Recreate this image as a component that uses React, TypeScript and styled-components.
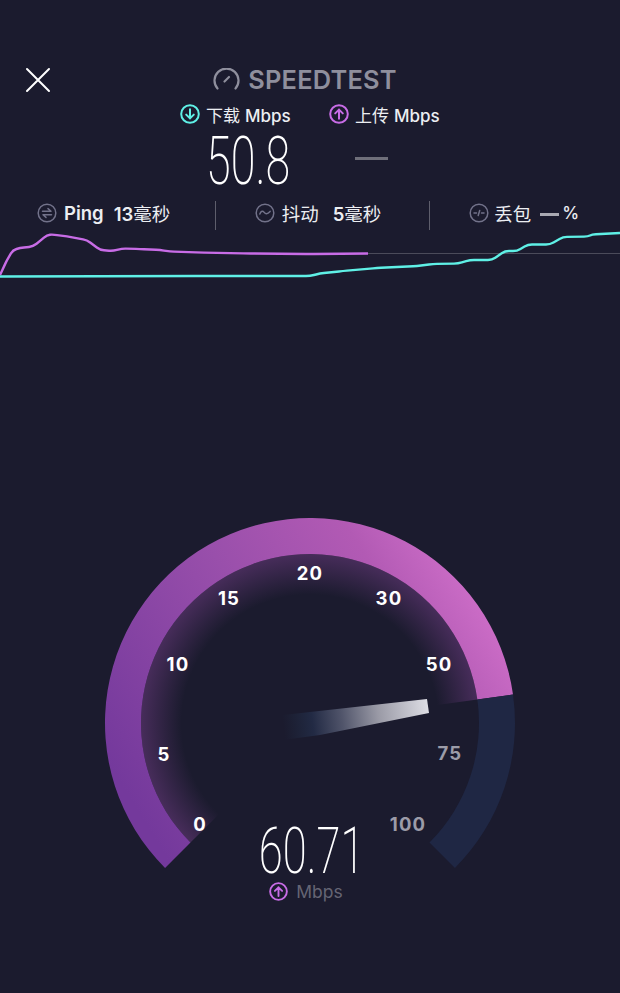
import styled, { createGlobalStyle } from 'styled-components';

const CYAN = '#5ff0e6';
const PURPLE = '#c86ce6';
const CX = 210;
const CY = 210;

const Global = createGlobalStyle`
  html, body {
    margin: 0;
    padding: 0;
    background: #1b1b2e;
  }
  #root {
    height: 993px;
    overflow: hidden;
  }
`;

const polar = (r: number, deg: number) => {
  const a = (deg * Math.PI) / 180;
  return [CX + r * Math.cos(a), CY - r * Math.sin(a)];
};

// ring sector between two angles, counted clockwise from startDeg to endDeg
const sector = (r1: number, r2: number, startDeg: number, endDeg: number) => {
  const [ax, ay] = polar(r2, startDeg);
  const [bx, by] = polar(r2, endDeg);
  const [cx, cy] = polar(r1, endDeg);
  const [dx, dy] = polar(r1, startDeg);
  const large = startDeg - endDeg > 180 ? 1 : 0;
  return `M${ax} ${ay}A${r2} ${r2} 0 ${large} 1 ${bx} ${by}L${cx} ${cy}A${r1} ${r1} 0 ${large} 0 ${dx} ${dy}Z`;
};

const purpleLine = [
  [0, 275], [7, 260], [13, 250], [20, 248], [33, 246.5], [40, 241], [47, 235], [53, 234.5], [67, 236.5], [87, 240],
  [100, 250], [113, 251], [122, 248.5], [140, 249], [160, 250], [170, 251.5], [200, 252.5], [247, 253.5], [310, 254], [368, 253.5],
];

const cyanLine = [
  [0, 276.5], [200, 276], [310, 276], [320, 273.5], [343, 271], [377, 268], [417, 266], [433, 264], [458, 263.5],
  [470, 260], [492, 260], [505, 251], [517, 251], [528, 244.5], [550, 244.5], [563, 237], [588, 236.5], [592, 234.5], [620, 233],
];

const gaugeLabels = [
  { text: '0', x: 200, y: 824, dim: false },
  { text: '5', x: 164, y: 754, dim: false },
  { text: '10', x: 178, y: 664, dim: false },
  { text: '15', x: 229, y: 598, dim: false },
  { text: '20', x: 310, y: 573, dim: false },
  { text: '30', x: 389, y: 598, dim: false },
  { text: '50', x: 439, y: 664, dim: false },
  { text: '75', x: 450, y: 753, dim: true },
  { text: '100', x: 408, y: 824, dim: true },
];

const Page = styled.div`
  width: 620px;
  height: 993px;
  display: flex;
  flex-direction: column;
  color: #fff;
  font-family: 'Inter', 'Noto Sans CJK SC', sans-serif;
`;

const Header = styled.header`
  display: grid;
  grid-template-columns: 76px 1fr 86px;
  align-items: center;
  height: 26px;
  margin-top: 64px;
  padding-left: 25px;
  box-sizing: border-box;
  width: 620px;
`;

const CloseBtn = styled.button`
  width: 26px;
  height: 26px;
  padding: 0;
  border: none;
  background: none;
  display: block;
`;

const Brand = styled.div`
  display: flex;
  align-items: center;
  justify-content: center;
  gap: 8px;
  margin-left: -25px;
  color: #8f8f9d;
  font-size: 25.4px;
  font-weight: 600;
  letter-spacing: 0.2px;
`;

const SpeedColumns = styled.div`
  display: grid;
  grid-template-columns: 149px 149px;
  padding-left: 180px;
  margin-top: 14px;
`;

const SpeedCol = styled.div`
  display: flex;
  flex-direction: column;
`;

const SpeedLabel = styled.div`
  display: flex;
  align-items: center;
  gap: 6px;
  height: 20px;
  font-size: 17px;
  font-weight: 500;
  color: #eceef2;
  white-space: nowrap;
`;

const CjkLabel = styled.span`
  font-weight: 400;
  margin-right: 5px;
`;

const SpeedValue = styled.div`
  height: 62px;
  margin-top: 7px;
  margin-left: 26px;
  font-family: 'Roboto', sans-serif;
  font-weight: 200;
  font-size: 66px;
  line-height: 62px;
  color: #fff;
  transform: scaleX(0.68);
  transform-origin: left center;
`;

const NoValue = styled.div`
  width: 33px;
  height: 3px;
  margin: 33px 0 0 26px;
  background: #6f6f7a;
`;

const Metrics = styled.div`
  display: flex;
  align-items: center;
  height: 30px;
  margin-top: 5px;
`;

const Metric = styled.div<{ $width: number; $pad: number; $iconGap?: number }>`
  display: flex;
  align-items: center;
  gap: ${(p) => p.$iconGap ?? 7}px;
  width: ${(p) => p.$width}px;
  padding-left: ${(p) => p.$pad}px;
  box-sizing: border-box;
  font-size: 18.5px;
  font-weight: 600;
  color: #eceef2;
  white-space: nowrap;
`;

const MetricName = styled.span<{ $gap: number; $cjk?: boolean }>`
  margin-right: ${(p) => p.$gap}px;
  font-weight: ${(p) => (p.$cjk ? 400 : 600)};
`;

const MetricUnit = styled.span`
  font-weight: 400;
`;

const Divider = styled.div`
  width: 1px;
  height: 29px;
  margin-top: 4px;
  background: #5e5e6c;
  flex: none;
`;

const LossValue = styled.span`
  font-size: 17px;
  font-weight: 500;
`;

const LossDash = styled.span`
  display: inline-block;
  width: 19px;
  height: 3.5px;
  background: #a9a9b2;
  margin-right: 3px;
  vertical-align: middle;
`;

const ChartBox = styled.svg`
  display: block;
  width: 620px;
  height: 60px;
  margin-top: 2px;
  flex: none;
`;

const GaugeWrap = styled.div`
  position: relative;
  width: 420px;
  height: 400px;
  margin: 223px 0 0 100px;
`;

const GaugeSvg = styled.svg`
  display: block;
`;

const TickLabel = styled.text<{ $dim: boolean }>`
  font-family: 'Inter', sans-serif;
  font-weight: 700;
  font-size: 18.5px;
  letter-spacing: 1.2px;
  text-anchor: middle;
  dominant-baseline: central;
  fill: ${(p) => (p.$dim ? '#9c9ca8' : '#fff')};
`;

const Reading = styled.div`
  position: absolute;
  left: 0;
  right: 0;
  top: 308px;
  display: flex;
  flex-direction: column;
  align-items: center;
`;

const ReadingValue = styled.div`
  height: 58px;
  font-family: 'Roboto', sans-serif;
  font-weight: 200;
  font-size: 64px;
  line-height: 62px;
  color: #fff;
  transform: translateX(2px) scaleX(0.68);
`;

const ReadingUnit = styled.div`
  display: flex;
  align-items: center;
  gap: 8px;
  margin: 2px 8px 0 0;
  font-size: 17.5px;
  color: #656574;
`;

const ArrowBadge = ({ color, down, size = 20 }: { color: string; down?: boolean; size?: number }) => (
  <svg width={size} height={size} viewBox="0 0 20 20" fill="none" stroke={color} strokeWidth="2" strokeLinecap="round" strokeLinejoin="round">
    <circle cx="10" cy="10" r="8.8" />
    {down ? <path d="M10 5.2v9.2M6.2 10.6l3.8 3.8 3.8-3.8" /> : <path d="M10 14.8V5.6M6.2 9.4L10 5.6l3.8 3.8" />}
  </svg>
);

const MetricIcon = ({ kind }: { kind: 'ping' | 'jitter' | 'loss' }) => (
  <svg width="20" height="20" viewBox="0 0 20 20" fill="none" stroke="#72728a" strokeWidth="1.5" strokeLinecap="round" strokeLinejoin="round" style={{ flex: 'none' }}>
    <circle cx="10" cy="10" r="8.8" />
    {kind === 'ping' && <path d="M5.5 8.2h8.5L11 5.6M14.5 11.8H6l3 2.6" />}
    {kind === 'jitter' && <path d="M4.8 11c1.3-3.4 3-3.4 4.4-1.6s3 2 5.9-1" />}
    {kind === 'loss' && <path d="M5 10h2.5M9.2 12.5l1.5-5M12.5 10H15" />}
  </svg>
);

// rounds each corner of a hand-traced line over a few px, so the flat steps stay flat
const linePath = (pts: number[][], top: number, radius = 4) => {
  let d = `M${pts[0][0]} ${pts[0][1] - top}`;
  for (let i = 1; i < pts.length - 1; i++) {
    const [x, y] = pts[i];
    const toward = ([ox, oy]: number[]) => {
      const len = Math.hypot(ox - x, oy - y);
      const t = Math.min(radius, len / 2) / len;
      return [x + (ox - x) * t, y + (oy - y) * t - top];
    };
    const [ax, ay] = toward(pts[i - 1]);
    const [bx, by] = toward(pts[i + 1]);
    d += `L${ax} ${ay}Q${x} ${y - top} ${bx} ${by}`;
  }
  const last = pts[pts.length - 1];
  return `${d}L${last[0]} ${last[1] - top}`;
};

export default function App() {
  return (
    <Page>
      <Global />
      <Header>
        <CloseBtn aria-label="close">
          <svg width="26" height="26" viewBox="0 0 26 26" stroke="#fff" strokeWidth="2" strokeLinecap="round">
            <path d="M2 2l22 22M24 2L2 24" />
          </svg>
        </CloseBtn>
        <Brand>
          <svg width="27" height="23" viewBox="0 0 27 23" fill="none" stroke="#8f8f9d" strokeWidth="2.2" strokeLinecap="round">
            <path d="M4.5 20.5A12 12 0 1 1 22.5 20.5" />
            <path d="M11.5 13.5l4.5-4.5" />
          </svg>
          SPEEDTEST
        </Brand>
        <span />
      </Header>

      <SpeedColumns>
        <SpeedCol>
          <SpeedLabel>
            <ArrowBadge color={CYAN} down />
            <span>
              <CjkLabel>下载</CjkLabel>Mbps
            </span>
          </SpeedLabel>
          <SpeedValue>50.8</SpeedValue>
        </SpeedCol>
        <SpeedCol>
          <SpeedLabel>
            <ArrowBadge color={PURPLE} />
            <span>
              <CjkLabel>上传</CjkLabel>Mbps
            </span>
          </SpeedLabel>
          <NoValue />
        </SpeedCol>
      </SpeedColumns>

      <Metrics>
        <Metric $width={215} $pad={37}>
          <MetricIcon kind="ping" />
          <MetricName $gap={3}>Ping</MetricName>
          <span>
            13<MetricUnit>毫秒</MetricUnit>
          </span>
        </Metric>
        <Divider />
        <Metric $width={214} $pad={39}>
          <MetricIcon kind="jitter" />
          <MetricName $gap={7} $cjk>
            抖动
          </MetricName>
          <span>
            5<MetricUnit>毫秒</MetricUnit>
          </span>
        </Metric>
        <Divider />
        <Metric $width={190} $pad={39} $iconGap={5}>
          <MetricIcon kind="loss" />
          <MetricName $gap={4} $cjk>
            丢包
          </MetricName>
          <LossValue>
            <LossDash />%
          </LossValue>
        </Metric>
      </Metrics>

      <ChartBox viewBox="0 0 620 60">
        <line x1="368" x2="620" y1="23.5" y2="23.5" stroke="#4b4b5a" strokeWidth="1" />
        <path d={linePath(purpleLine, 230)} fill="none" stroke={PURPLE} strokeWidth="2.4" strokeLinejoin="round" />
        <path d={linePath(cyanLine, 230)} fill="none" stroke={CYAN} strokeWidth="2.4" strokeLinejoin="round" />
      </ChartBox>

      <GaugeWrap>
        <GaugeSvg width="420" height="400" viewBox="0 0 420 400">
          <defs>
            <linearGradient id="arc" gradientUnits="userSpaceOnUse" x1="70" y1="350" x2="410" y2="140">
              <stop offset="0" stopColor="#74399c" />
              <stop offset="0.5" stopColor="#994fab" />
              <stop offset="0.82" stopColor="#b25ab4" />
              <stop offset="1" stopColor="#cb6cc6" />
            </linearGradient>
            <radialGradient id="glow" gradientUnits="userSpaceOnUse" cx={CX} cy={CY} r="169">
              <stop offset="0.76" stopColor="#a050b4" stopOpacity="0" />
              <stop offset="1" stopColor="#a050b4" stopOpacity="0.33" />
            </radialGradient>
            <linearGradient id="needle" gradientUnits="userSpaceOnUse" x1="183" y1="210" x2="329" y2="192">
              <stop offset="0" stopColor="#1f2a40" stopOpacity="0" />
              <stop offset="0.2" stopColor="#222a44" />
              <stop offset="0.4" stopColor="#50546a" />
              <stop offset="0.65" stopColor="#9a9aa6" />
              <stop offset="1" stopColor="#dfdfe6" />
            </linearGradient>
          </defs>
          <path d={sector(125, 169, 225, 8)} fill="url(#glow)" />
          <path d={sector(169, 205, 225, 8)} fill="url(#arc)" />
          <path d={sector(169, 205, 8, -45)} fill="#1f2744" />
          <path d="M183 202L327 186L329 200L220 222L183 227Z" fill="url(#needle)" />
          {gaugeLabels.map((l) => (
            <TickLabel key={l.text} $dim={l.dim} x={l.x - 100} y={l.y - 513}>
              {l.text}
            </TickLabel>
          ))}
        </GaugeSvg>
        <Reading>
          <ReadingValue>60.71</ReadingValue>
          <ReadingUnit>
            <ArrowBadge color={PURPLE} size={19} />
            Mbps
          </ReadingUnit>
        </Reading>
      </GaugeWrap>
    </Page>
  );
}
